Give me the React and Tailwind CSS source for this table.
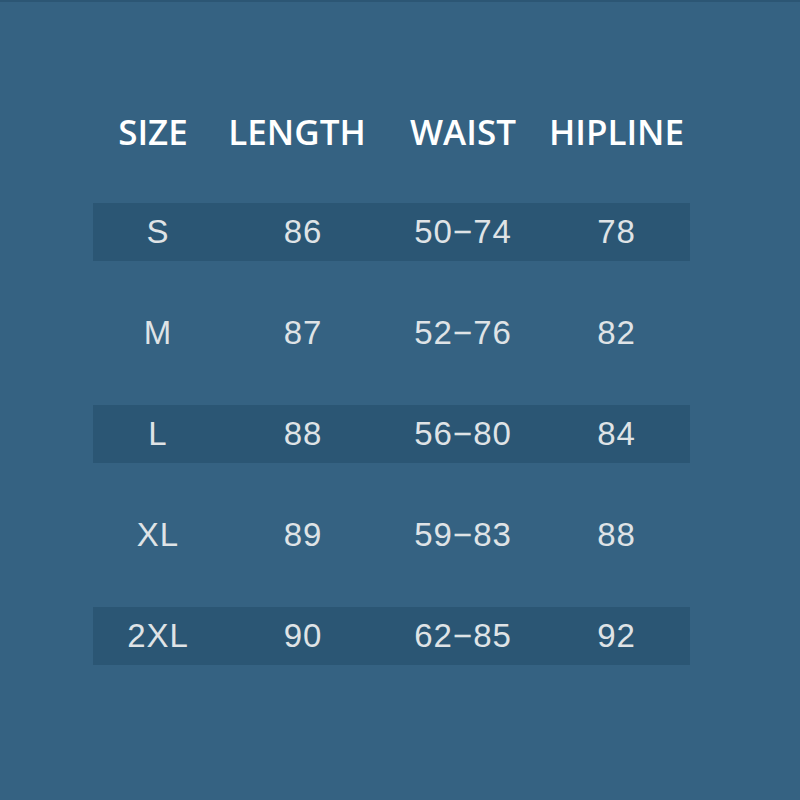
const header = ['SIZE', 'LENGTH', 'WAIST', 'HIPLINE'];

const rows = [
  ['S', '86', '50−74', '78'],
  ['M', '87', '52−76', '82'],
  ['L', '88', '56−80', '84'],
  ['XL', '89', '59−83', '88'],
  ['2XL', '90', '62−85', '92'],
];

const cols = 'grid grid-cols-[130px_160px_160px_147px] items-center';

export default function App() {
  return (
    <div className="w-[800px] h-[800px] bg-[#356282] border-t-2 border-[#2c5674] overflow-hidden">
      <div className="ml-[93px] w-[597px] pt-[95px]">
        {/* header */}
        <div className={`${cols} h-[70px] text-white font-semibold text-[35px]`}
             style={{ fontFamily: '"Open Sans", sans-serif' }}>
          {header.map((h, i) => (
            <div key={h} className={`text-center ${i === 0 ? 'pr-[10px]' : i === 1 ? 'pr-[12px]' : ''}`}>{h}</div>
          ))}
        </div>

        {/* body */}
        <div className="flex flex-col gap-[43px] mt-[36px] text-[#dfe3e6] text-[33px] tracking-[1px]"
             style={{ fontFamily: '"Liberation Sans", Arial, sans-serif' }}>
          {rows.map((r, i) => (
            <div key={r[0]} className={`${cols} h-[58px] ${i % 2 === 0 ? 'bg-[#2b5674]' : ''}`}>
              {r.map((c, j) => (
                <div key={j} className="text-center">{c}</div>
              ))}
            </div>
          ))}
        </div>
      </div>
    </div>
  );
}
